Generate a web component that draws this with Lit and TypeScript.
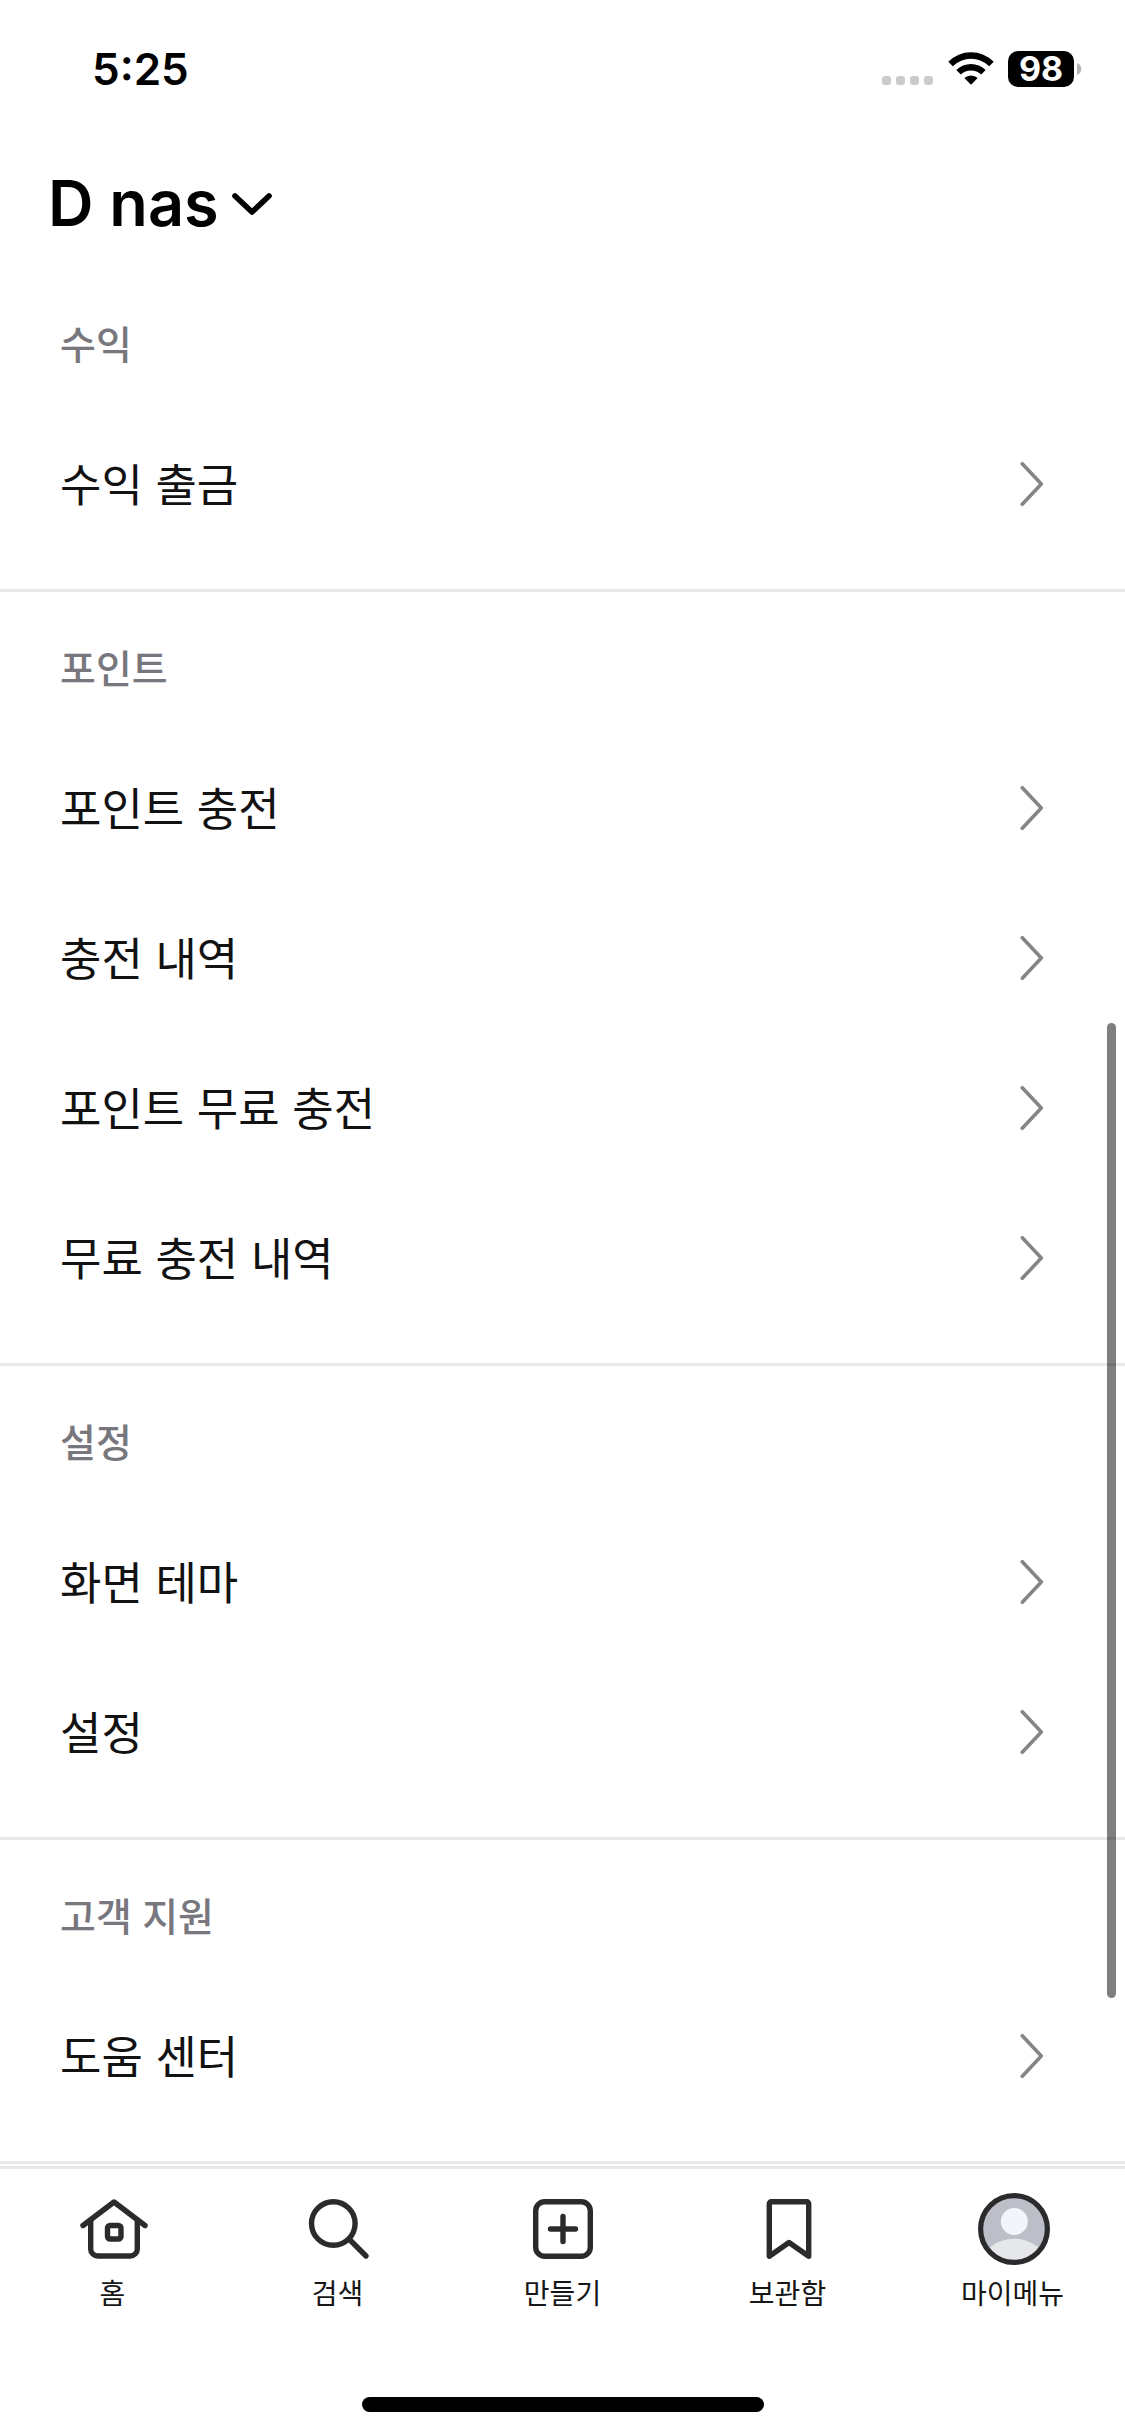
import { LitElement, html, svg, css } from "lit";
import { customElement, property } from "lit/decorators.js";

interface MenuGroup {
  title: string;
  items: string[];
}

const GROUPS: MenuGroup[] = [
  { title: "수익", items: ["수익 출금"] },
  { title: "포인트", items: ["포인트 충전", "충전 내역", "포인트 무료 충전", "무료 충전 내역"] },
  { title: "설정", items: ["화면 테마", "설정"] },
  { title: "고객 지원", items: ["도움 센터"] },
];

const TABS = [
  {
    label: "홈",
    icon: svg`<g class="line">
      <path d="M5 32.500 L36 9 L67 32.500" />
      <path d="M12.700 27.500 V56 a7 7 0 0 0 7 7 H52.300 a7 7 0 0 0 7 -7 V27.500" />
      <rect x="29.500" y="32.500" width="13.500" height="13.500" rx="2.500" />
    </g>`,
  },
  {
    label: "검색",
    icon: svg`<g class="line">
      <circle cx="30.300" cy="30.500" r="21.800" />
      <path d="M46.500 46.500 L63 63" />
    </g>`,
  },
  {
    label: "만들기",
    icon: svg`<g class="line">
      <rect x="7.700" y="8.700" width="54.600" height="54.600" rx="9" />
      <path d="M35 23.500 V48.500 M22.500 36 H47.500" />
    </g>`,
  },
  {
    label: "보관함",
    icon: svg`<g class="line">
      <path d="M16.300 63.200 V10.700 a2 2 0 0 1 2 -2 H53.700 a2 2 0 0 1 2 2 V63.200 L36 49.500 Z" />
    </g>`,
  },
  {
    label: "마이메뉴",
    icon: svg`
      <clipPath id="disc"><circle cx="36" cy="36" r="33" /></clipPath>
      <circle cx="36" cy="36" r="33" fill="#bcbec8" />
      <circle cx="36.300" cy="28.500" r="13.500" fill="#f2f6fa" />
      <ellipse cx="36" cy="70" rx="32" ry="24.200" fill="#e6e7e9" clip-path="url(#disc)" />
      <circle cx="36" cy="36" r="33.400" fill="none" stroke="#2b2b2d" stroke-width="5.200" />
    `,
  },
];

@customElement("status-bar")
class StatusBar extends LitElement {
  static styles = css`
    :host {
      display: flex;
      justify-content: space-between;
      align-items: center;
      height: 138px;
      padding: 0 43px 0 92px;
      box-sizing: border-box;
      color: #000;
    }
    .time {
      font-size: 44px;
      font-weight: 600;
      line-height: 54px;
    }
    .signals {
      display: flex;
      align-items: center;
      gap: 14px;
    }
    .battery {
      display: flex;
      align-items: center;
      gap: 3px;
    }
    .level {
      width: 66px;
      height: 36px;
      border-radius: 10px;
      background: #000;
      color: #fff;
      font-size: 34px;
      font-weight: 700;
      line-height: 36px;
      text-align: center;
    }
    svg {
      display: block;
    }
  `;

  render() {
    return html`
      <span class="time">5:25</span>
      <div class="signals">
        <svg width="52" height="36" viewBox="0 0 52 36" fill="#cbcbcb" aria-hidden="true">
          ${[0, 14, 28, 42].map((x) => svg`<rect x=${x} y="25" width="9" height="9" rx="3" />`)}
        </svg>
        <svg width="46" height="36" viewBox="0 0 46 36" aria-hidden="true">
          <path d="M0.300 10.800 A32 32 0 0 1 45.700 10.800 L41.200 15.300 A26 26 0 0 0 4.800 15.300 Z" />
          <path d="M8.300 19 A21 21 0 0 1 37.700 19 L33.200 23.500 A14.700 14.700 0 0 0 12.800 23.500 Z" />
          <path d="M16.300 27 A10 10 0 0 1 29.700 27 L23 33.700 Z" />
        </svg>
        <div class="battery">
          <span class="level">98</span>
          <svg width="5" height="14" viewBox="0 0 5 14" aria-hidden="true">
            <path d="M0 1 Q4.300 2.500 4.300 7 Q4.300 11.500 0 13 Z" fill="#b5b5b5" />
          </svg>
        </div>
      </div>
    `;
  }
}

@customElement("menu-group")
class MenuGroupSection extends LitElement {
  @property({ attribute: false }) group!: MenuGroup;

  static styles = css`
    :host {
      display: block;
      padding-bottom: 30px;
      border-bottom: 3px solid #e9e9e9;
    }
    .title {
      margin: 0;
      padding: 48px 60px 36px;
      font-size: 39px;
      font-weight: 500;
      line-height: 57px;
      color: #77777d;
    }
    .list {
      margin: 0;
      padding: 0;
      list-style: none;
    }
    .row {
      display: flex;
      align-items: center;
      justify-content: space-between;
      height: 150px;
      padding: 0 81px 0 60px;
      font-size: 45px;
      line-height: 60px;
      color: #121212;
      text-decoration: none;
    }
    .name {
      padding-top: 4px;
    }
    .arrow {
      fill: none;
      stroke: #858585;
      stroke-width: 3.600;
      stroke-linecap: round;
      stroke-linejoin: round;
    }
  `;

  render() {
    return html`
      <h2 class="title">${this.group.title}</h2>
      <ul class="list">
        ${this.group.items.map(
          (item) => html`<li>
            <a class="row" href="#">
              <span class="name">${item}</span>
              <svg class="arrow" width="24" height="48" viewBox="0 0 24 48" aria-hidden="true">
                <path d="M2.300 3.700 L21.300 24 L2.300 44.300" />
              </svg>
            </a>
          </li>`,
        )}
      </ul>
    `;
  }
}

@customElement("tab-bar")
class TabBar extends LitElement {
  static styles = css`
    :host {
      display: block;
      border-top: 3px solid #e9e9e9;
      background: #fff;
    }
    .tabs {
      display: grid;
      grid-template-columns: repeat(5, 1fr);
      padding-top: 24px;
    }
    .tab {
      display: flex;
      flex-direction: column;
      align-items: center;
      gap: 9px;
      color: #161616;
      font-size: 28px;
      line-height: 40px;
      text-decoration: none;
    }
    .line {
      fill: none;
      stroke: #2b2b2d;
      stroke-width: 5.400;
      stroke-linecap: round;
      stroke-linejoin: round;
    }
    .indicator {
      width: 402px;
      height: 15px;
      margin: 83px auto 24px;
      border-radius: 8px;
      background: #000;
    }
  `;

  render() {
    return html`
      <nav class="tabs">
        ${TABS.map(
          (tab) => html`<a class="tab" href="#">
            <svg width="75" height="72" viewBox="-3 0 75 72" aria-hidden="true">${tab.icon}</svg>
            <span>${tab.label}</span>
          </a>`,
        )}
      </nav>
      <div class="indicator"></div>
    `;
  }
}

@customElement("app-root")
class AppRoot extends LitElement {
  static styles = css`
    :host {
      display: flex;
      flex-direction: column;
      position: relative;
      min-height: 100vh;
      background: #fff;
      font-family: Inter, "Noto Sans CJK KR", sans-serif;
    }
    .header {
      box-sizing: border-box;
      height: 130px;
      padding: 0 48px;
      display: flex;
      align-items: center;
    }
    .heading {
      margin: 0;
    }
    .account {
      display: flex;
      align-items: center;
      gap: 12px;
      padding: 0;
      border: 0;
      background: none;
      color: #000;
      font: inherit;
      font-size: 63px;
      font-weight: 600;
      line-height: 78px;
    }
    .caret {
      fill: none;
      stroke: #000;
      stroke-width: 5.600;
      stroke-linecap: round;
      stroke-linejoin: round;
    }
    .content {
      flex: 1;
    }
    .scrollbar {
      position: absolute;
      right: 9px;
      top: 42%;
      bottom: 18%;
      width: 9px;
      border-radius: 5px;
      background: rgba(0, 0, 0, 0.5);
    }
  `;

  render() {
    return html`
      <status-bar></status-bar>
      <header class="header">
        <h1 class="heading">
          <button class="account" type="button">
            <span>D nas</span>
            <svg class="caret" width="42" height="26" viewBox="0 0 42 26" aria-hidden="true">
              <path d="M4 6 L21 22 L38 6" />
            </svg>
          </button>
        </h1>
      </header>
      <main class="content">
        ${GROUPS.map((group) => html`<menu-group .group=${group}></menu-group>`)}
      </main>
      <tab-bar></tab-bar>
      <div class="scrollbar"></div>
    `;
  }
}
